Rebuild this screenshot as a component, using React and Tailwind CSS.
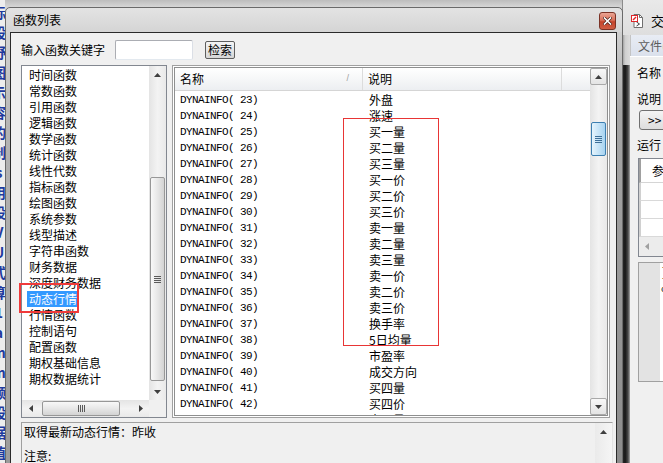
import React from "react";

const CJK = "font-['Noto_Sans_CJK_SC','Noto_Sans',sans-serif]";
const MONO = "font-['Liberation_Mono',monospace]";

function Tri({ dir, color = "#3f3f3f" }) {
  const vert = dir === "up" || dir === "down";
  const w = vert ? 7 : 4;
  const h = vert ? 4 : 7;
  const pts = {
    up: "0,4 3.5,0 7,4",
    down: "0,0 7,0 3.5,4",
    left: "4,0 4,7 0,3.5",
    right: "0,0 0,7 4,3.5",
  }[dir];
  return (
    <svg width={w} height={h} viewBox={`0 0 ${w} ${h}`}>
      <polygon points={pts} fill={color} />
    </svg>
  );
}

function ArrowBtn({ dir, boxed }) {
  return (
    <div
      className={
        boxed
          ? "w-[17px] h-[17px] shrink-0 flex items-center justify-center border border-[#a9a9a9] rounded-[2px] bg-[linear-gradient(to_bottom,#f8f8f8,#e4e4e4)]"
          : "w-[17px] h-[17px] shrink-0 flex items-center justify-center"
      }
    >
      <Tri dir={dir} />
    </div>
  );
}

function GripH({ blue }) {
  return (
    <div className="flex flex-col gap-[1px]">
      {[0, 1, 2, 3].map((i) => (
        <div key={i} className={blue ? "w-[7px] h-[1px] bg-[#3d6f98]" : "w-[7px] h-[1px] bg-[#5a5a5a]"} />
      ))}
    </div>
  );
}

function VScroll({ before, thumb, blue, boxed }) {
  return (
    <div className="w-[17px] h-full shrink-0 flex flex-col bg-[linear-gradient(to_right,#e4e4e4,#f3f3f3_50%,#e9e9e9)]">
      <ArrowBtn dir="up" boxed={boxed} />
      <div className={before} />
      <div
        className={
          blue
            ? `${thumb} mx-[1px] rounded-[2px] border border-[#3c7fb1] bg-[linear-gradient(to_right,#e6f4fc,#c6e4f7_50%,#a7d3f1)] flex items-center justify-center`
            : `${thumb} mx-[1px] rounded-[2px] border border-[#979797] bg-[linear-gradient(to_right,#f8f8f8,#e7e7e7_50%,#d3d3d3)] flex items-center justify-center`
        }
      >
        <GripH blue={blue} />
      </div>
      <div className="flex-1" />
      <ArrowBtn dir="down" boxed={boxed} />
    </div>
  );
}

const leftItems = [
  "时间函数",
  "常数函数",
  "引用函数",
  "逻辑函数",
  "数学函数",
  "统计函数",
  "线性代数",
  "指标函数",
  "绘图函数",
  "系统参数",
  "线型描述",
  "字符串函数",
  "财务数据",
  "深度财务数据",
  "动态行情",
  "行情函数",
  "控制语句",
  "配置函数",
  "期权基础信息",
  "期权数据统计",
];

const rows = [
  [23, "外盘"],
  [24, "涨速"],
  [25, "买一量"],
  [26, "买二量"],
  [27, "买三量"],
  [28, "买一价"],
  [29, "买二价"],
  [30, "买三价"],
  [31, "卖一量"],
  [32, "卖二量"],
  [33, "卖三量"],
  [34, "卖一价"],
  [35, "卖二价"],
  [36, "卖三价"],
  [37, "换手率"],
  [38, "5日均量"],
  [39, "市盈率"],
  [40, "成交方向"],
  [41, "买四量"],
  [42, "买四价"],
  [43, "卖四量"],
];

const bgChars = ["标", "股", "野", "图", "示", "容", "的", "制", "s", "用", "设", "V", "U", "式", "算", "1", "a", "m", "m", "额", "股", "据", "值"];

function LeftList() {
  return (
    <div className="w-[146px] h-[353px] shrink-0 border border-[#828790] bg-white flex flex-col">
      <div className="flex h-[334px]">
        <div className={`flex-1 pt-[1px] overflow-hidden ${CJK} text-[12px] text-black`}>
          {leftItems.map((t) => (
            <div key={t} className="h-[16px] leading-[16px] pl-[5px] whitespace-nowrap">
              {t === "动态行情" ? (
                <span className="inline-block bg-[#3399ff] text-white px-[2px] leading-[16px]">{t}</span>
              ) : (
                <span className="inline-block px-[2px]">{t}</span>
              )}
            </div>
          ))}
        </div>
        <VScroll before="h-[94px]" thumb="h-[204px]" />
      </div>
      <div className="flex h-[17px]">
        <div className="flex-1 flex items-center bg-[linear-gradient(to_bottom,#e4e4e4,#f3f3f3_50%,#e9e9e9)]">
          <ArrowBtn dir="left" />
          <div className="w-[3px]" />
          <div className="w-[78px] h-[15px] rounded-[2px] border border-[#979797] bg-[linear-gradient(to_bottom,#f8f8f8,#e7e7e7_50%,#d3d3d3)] flex items-center justify-center">
            <div className="flex gap-[1px]">
              {[0, 1, 2, 3].map((i) => (
                <div key={i} className="w-[1px] h-[7px] bg-[#5a5a5a]" />
              ))}
            </div>
          </div>
          <div className="flex-1" />
          <ArrowBtn dir="right" />
        </div>
        <div className="w-[17px] bg-[#f0f0f0]" />
      </div>
    </div>
  );
}

function RightList() {
  return (
    <div className="w-[438px] h-[353px] shrink-0 border border-[#a0a0a0] bg-white p-[1px]">
      <div className="w-full h-full border border-[#8e8f8f] flex">
        <div className="flex-1 flex flex-col overflow-hidden">
          <div className={`h-[23px] shrink-0 flex border-b border-[#d5d5d5] bg-[linear-gradient(to_bottom,#ffffff,#f6f7f8_50%,#eceef1)] ${CJK} text-[12px] text-black`}>
            <div className="w-[188px] flex items-center justify-between pl-[5px] pr-[13px] border-r border-[#dcdcdc]">
              <span>名称</span>
              <span className="text-[9px] text-[#a0a0a0] font-['Liberation_Sans',sans-serif]">/</span>
            </div>
            <div className="w-[199px] flex items-center pl-[5px] border-r border-[#dcdcdc]">
              <span>说明</span>
            </div>
            <div className="flex-1" />
          </div>
          <div className="pt-[1px]">
            {rows.map(([n, d]) => (
              <div key={n} className="h-[16px] flex items-center whitespace-nowrap">
                <div className={`w-[189px] pl-[5px] ${MONO} text-[11px] tracking-[-0.6px] text-black leading-[16px]`}>
                  {`DYNAINFO( ${n})`}
                </div>
                <div className={`pl-[5px] ${CJK} text-[12px] text-black leading-[16px]`}>{d}</div>
              </div>
            ))}
          </div>
        </div>
        <VScroll before="h-[37px]" thumb="h-[34px]" blue boxed />
      </div>
    </div>
  );
}

function DocIcon() {
  return (
    <svg width="12" height="14" viewBox="0 0 12 14">
      <path d="M3 0.5 H8.5 L11.5 3.5 V13.5 H3 Z" fill="#ffffff" stroke="#6f6f6f" />
      <path d="M8.5 0.5 V3.5 H11.5" fill="none" stroke="#6f6f6f" />
      <path d="M5.5 8 L8.5 10 L5.5 12" fill="none" stroke="#3a3a3a" />
      <rect x="0.5" y="1.5" width="6" height="6" fill="#ffffff" stroke="#e0262a" />
      <path d="M2 6 L5 3" stroke="#e0262a" strokeWidth="1.4" />
    </svg>
  );
}

function RightWindow() {
  return (
    <div className="absolute left-[622px] top-0 w-[60px] h-[470px] flex flex-col">
      <div className="h-[35px] shrink-0 flex items-start pl-[8px] pt-[14px] bg-[linear-gradient(to_bottom,#e9e9e9,#dedede)] border-l border-[#8c8c8c]">
        <DocIcon />
        <span className={`ml-[8px] ${CJK} text-[13px] leading-[14px] text-black`}>交易</span>
      </div>
      <div className="flex flex-1">
        <div className="w-[8px] shrink-0 flex flex-col">
          <div className="h-[30px] bg-[linear-gradient(to_right,#8f8f8f,#cfcfcf_40%,#dcdcdc)]" />
          <div className="flex-1 bg-[linear-gradient(to_right,#2e2e2e,#181818_40%,#4a4a4a_75%,#a8a8a8)]" />
        </div>
        <div className={`flex-1 bg-[#f0f0f0] flex flex-col ${CJK} text-[12px] text-black`}>
          <div className="h-[21px] shrink-0 flex items-center pl-[7px] bg-[linear-gradient(to_bottom,#e8ecf4,#dbe1ec)] border-l border-[#c4c4c4] text-[#5c5c5c] whitespace-nowrap">
            文件(F)
          </div>
          <div className="h-[1px] bg-white" />
          <div className="pl-[7px] flex flex-col">
            <div className="mt-[10px] leading-[12px] whitespace-nowrap">名称</div>
            <div className="mt-[14px] leading-[12px] whitespace-nowrap">说明</div>
            <div className="mt-[5px] ml-[2px] h-[20px] w-[40px] rounded-[3px] border border-[#707070] bg-[linear-gradient(to_bottom,#f4f4f4,#dddddd)] flex items-center pl-[8px] text-[12px] leading-[12px]">
              &gt;&gt;
            </div>
            <div className="mt-[9px] leading-[12px] whitespace-nowrap">运行</div>
            <div className="mt-[7px] ml-[1px] h-[99px] w-[40px] border border-[#828790] bg-white flex flex-col">
              <div className="h-[24px] border-b border-[#d5d5d5] border-l-2 border-l-[#a0a0a0] flex items-center pl-[11px] whitespace-nowrap">参数</div>
              <div className="h-[18px] border-b border-[#d9d9d9] border-l-2 border-l-[#d0d0d0]" />
              <div className="h-[18px] border-b border-[#d9d9d9] border-l-2 border-l-[#d0d0d0]" />
              <div className="h-[18px] border-b border-[#d9d9d9] border-l-2 border-l-[#d0d0d0]" />
              <div className="flex-1 bg-[#ececec] flex items-center pl-[6px]">
                <Tri dir="left" color="#a0a0a0" />
              </div>
            </div>
            <div className="mt-[5px] ml-[1px] h-[120px] w-[40px] border border-[#a0a0a0] flex">
              <div className="w-[21px] bg-[#e3e3e3]" />
              <div className="flex-1 bg-white text-[9px] leading-[11px] pt-[0px] pl-[1px] font-['Liberation_Mono',monospace]">
                <div>-</div>
                <div>-</div>
                <div>c</div>
              </div>
            </div>
          </div>
        </div>
      </div>
    </div>
  );
}

export default function App() {
  return (
    <div className="relative w-[663px] h-[463px] overflow-hidden bg-[linear-gradient(to_bottom,#bdbdbd,#d6d6d6_7px,#d6d6d6)]">
      {/* background window strip on the left */}
      <div className="absolute left-0 top-0 w-[5px] h-full bg-[#ededed] overflow-hidden">
        <div className={`ml-[-8px] pt-[2px] flex flex-col ${CJK} text-[14px] leading-[20px] text-[#1d3a9e] font-bold`}>
          {bgChars.map((c, i) => (
            <div key={i} className="h-[20px] w-[14px] text-center">
              {c}
            </div>
          ))}
        </div>
      </div>

      <RightWindow />

      {/* dialog */}
      <div className="absolute left-[5px] top-[7px] w-[618px] h-[470px] border border-[#6a6a6a] rounded-t-[5px] bg-[linear-gradient(to_bottom,#e3e3e3,#d4d4d4_25px,#b4b4b4_120px,#9a9a9a)] flex flex-col">
        <div className="h-[24px] shrink-0 flex items-start justify-between">
          <span className={`pl-[7px] pt-[4px] ${CJK} text-[12px] leading-[16px] text-black`}>函数列表</span>
          <div className="mt-[4px] mr-[6px] w-[17px] h-[18px] rounded-[3px] border border-[#7b3326] bg-[linear-gradient(to_bottom,#eaa594,#d9715b_45%,#c4442b_55%,#cf5e44)] flex items-center justify-center">
            <svg width="9" height="8" viewBox="0 0 9 8">
              <path d="M1.5 1 L7.5 7 M7.5 1 L1.5 7" stroke="#4a2018" strokeWidth="3" strokeLinecap="square" />
              <path d="M1.5 1 L7.5 7 M7.5 1 L1.5 7" stroke="#ffffff" strokeWidth="1.6" strokeLinecap="square" />
            </svg>
          </div>
        </div>
        <div className="flex flex-1">
          <div className="w-[4px] shrink-0" />
          <div className="w-[607px] shrink-0 border-l border-t border-r border-[#2a2a2a] bg-[#f0f0f0] flex flex-col">
            <div className={`mt-[7px] h-[20px] flex items-center pl-[10px] ${CJK} text-[12px] text-black`}>
              <span className="w-[84px] whitespace-nowrap leading-[16px]">输入函数关键字</span>
              <div className="ml-[10px] w-[78px] h-[20px] border border-[#abadb3] border-b-[#e3e9ef] border-r-[#dbdfe6] rounded-[2px] bg-white" />
              <div className="ml-[12px] w-[30px] h-[18px] border border-[#5e5e5e] rounded-[2px] bg-[linear-gradient(to_bottom,#f4f4f4,#e6e6e6_50%,#d6d6d6)] flex items-center justify-center leading-[12px]">
                检索
              </div>
            </div>
            <div className="mt-[5px] flex pl-[10px] gap-[5px]">
              <LeftList />
              <RightList />
            </div>
            <div className="mt-[4px] ml-[10px] w-[592px] h-[70px] border-l border-t border-[#a0a0a0] border-r border-r-[#e3e3e3] bg-[#f0f0f0] flex">
              <div className={`flex-1 pl-[2px] pt-[3px] ${CJK} text-[12px] leading-[12px] text-black whitespace-nowrap overflow-hidden`}>
                <div className="h-[12px]">取得最新动态行情：昨收</div>
                <div className="h-[12px]" />
                <div className="h-[13px]">注意:</div>
                <div className="h-[12px]">1.动态行情函数返回最新数据，在历史周期上返回当前最新值</div>
              </div>
              <div className="w-[17px] shrink-0 flex flex-col bg-[linear-gradient(to_right,#eaeaea,#f5f5f5)]">
                <ArrowBtn dir="up" />
              </div>
            </div>
          </div>
          <div className="w-[5px] shrink-0 bg-[linear-gradient(to_bottom,#d0d0d0,#a5a5a5_80px,#8a8a8a)]" />
        </div>
      </div>

      {/* red annotation boxes */}
      <div className="absolute left-[19px] top-[283px] w-[60px] h-[30px] border-2 border-[#f03a3a]" />
      <div className="absolute left-[343px] top-[118px] w-[96px] h-[228px] border border-[#e83535]" />
    </div>
  );
}
